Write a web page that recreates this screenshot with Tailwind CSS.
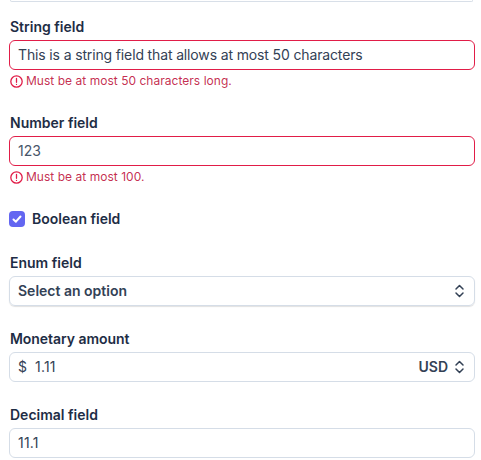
<!DOCTYPE html>
<html>
<head>
<meta charset="utf-8">
<script src="https://cdn.jsdelivr.net/npm/@tailwindcss/browser@4"></script>
</head>
<body class="bg-white font-['Inter',sans-serif] text-[#1e2d45] overflow-hidden">
<div class="w-[481px] h-[460px] overflow-hidden px-[9px] flex flex-col">
  <div class="h-[2px] mx-[1px] -mr-[1px] border-b border-x border-[#d8dfe8] rounded-b-md shrink-0"></div>
  <div class="mt-[15px] flex flex-col gap-[3px]">
    <label class="pl-[1px] text-sm leading-5 font-semibold">String field</label>
    <div class="h-[30px] w-[466px] border-[1.5px] border-[#e11d48] rounded-md px-2 flex items-center text-sm tracking-[-0.14px] text-[#334155]">This is a string field that allows at most 50 characters</div>
    <div class="flex items-center gap-[3px] pl-[1px] h-4 text-xs tracking-[0.03px] text-[#be123c]/90">
      <svg class="w-[13px] h-[13px] shrink-0" viewBox="0 0 24 24" fill="none" stroke="#e11d48" stroke-width="2.4" stroke-linecap="round"><circle cx="12" cy="12" r="10.5"/><path d="M12 6.5v7M12 17.2v.2"/></svg>
      <span>Must be at most 50 characters long.</span>
    </div>
  </div>
  <div class="mt-[24px] flex flex-col gap-[3px]">
    <label class="pl-[1px] text-sm leading-5 font-semibold">Number field</label>
    <div class="h-[30px] w-[466px] border-[1.5px] border-[#e11d48] rounded-md px-2 flex items-center text-sm text-[#475569]">123</div>
    <div class="flex items-center gap-[3px] pl-[1px] h-4 text-xs tracking-[0.03px] text-[#be123c]/90">
      <svg class="w-[13px] h-[13px] shrink-0" viewBox="0 0 24 24" fill="none" stroke="#e11d48" stroke-width="2.4" stroke-linecap="round"><circle cx="12" cy="12" r="10.5"/><path d="M12 6.5v7M12 17.2v.2"/></svg>
      <span>Must be at most 100.</span>
    </div>
  </div>
  <div class="mt-[24px] flex items-center gap-[7px] h-5">
    <span class="w-4 h-4 rounded bg-[#6366f1] flex items-center justify-center">
      <svg class="w-3 h-3" viewBox="0 0 12 12" fill="none" stroke="#fff" stroke-width="2" stroke-linecap="round" stroke-linejoin="round"><path d="M2.5 6.5l2.4 2.2L9.5 3.5"/></svg>
    </span>
    <span class="text-sm leading-5 font-semibold">Boolean field</span>
  </div>
  <div class="mt-[24px] flex flex-col gap-[3px]">
    <label class="pl-[1px] text-sm leading-5 font-semibold">Enum field</label>
    <div class="h-[30px] w-[466px] border border-[#d5dde7] rounded-md pl-2 pr-[9px] flex items-center justify-between text-sm font-semibold text-[#334155] shadow-[0_1px_1px_rgba(0,0,0,0.12)]">
      <span>Select an option</span>
      <svg class="w-[11px] h-[14px]" viewBox="0 0 11 14" fill="none" stroke="#334155" stroke-width="1.5" stroke-linecap="round" stroke-linejoin="round"><path d="M2 5l3.5-3.5L9 5M2 9l3.5 3.5L9 9"/></svg>
    </div>
  </div>
  <div class="mt-[23px] flex flex-col gap-[3px]">
    <label class="pl-[1px] text-sm leading-5 font-semibold tracking-[-0.05px]">Monetary amount</label>
    <div class="h-[30px] w-[466px] border border-[#d5dde7] rounded-md pl-2 pr-[9px] flex items-center text-sm text-[#334155]">
      <span class="w-[17px]">$</span>
      <span class="tracking-[0.2px]">1.11</span>
      <span class="ml-auto font-semibold">USD</span>
      <svg class="w-[11px] h-[14px] ml-[6px]" viewBox="0 0 11 14" fill="none" stroke="#334155" stroke-width="1.5" stroke-linecap="round" stroke-linejoin="round"><path d="M2 5l3.5-3.5L9 5M2 9l3.5 3.5L9 9"/></svg>
    </div>
  </div>
  <div class="mt-[23px] flex flex-col gap-[3px]">
    <label class="pl-[1px] text-sm leading-5 font-semibold">Decimal field</label>
    <div class="h-[30px] w-[466px] border border-[#d5dde7] rounded-md px-2 flex items-center text-sm tracking-[0.2px] text-[#334155]">11.1</div>
  </div>
</div>
</body>
</html>
